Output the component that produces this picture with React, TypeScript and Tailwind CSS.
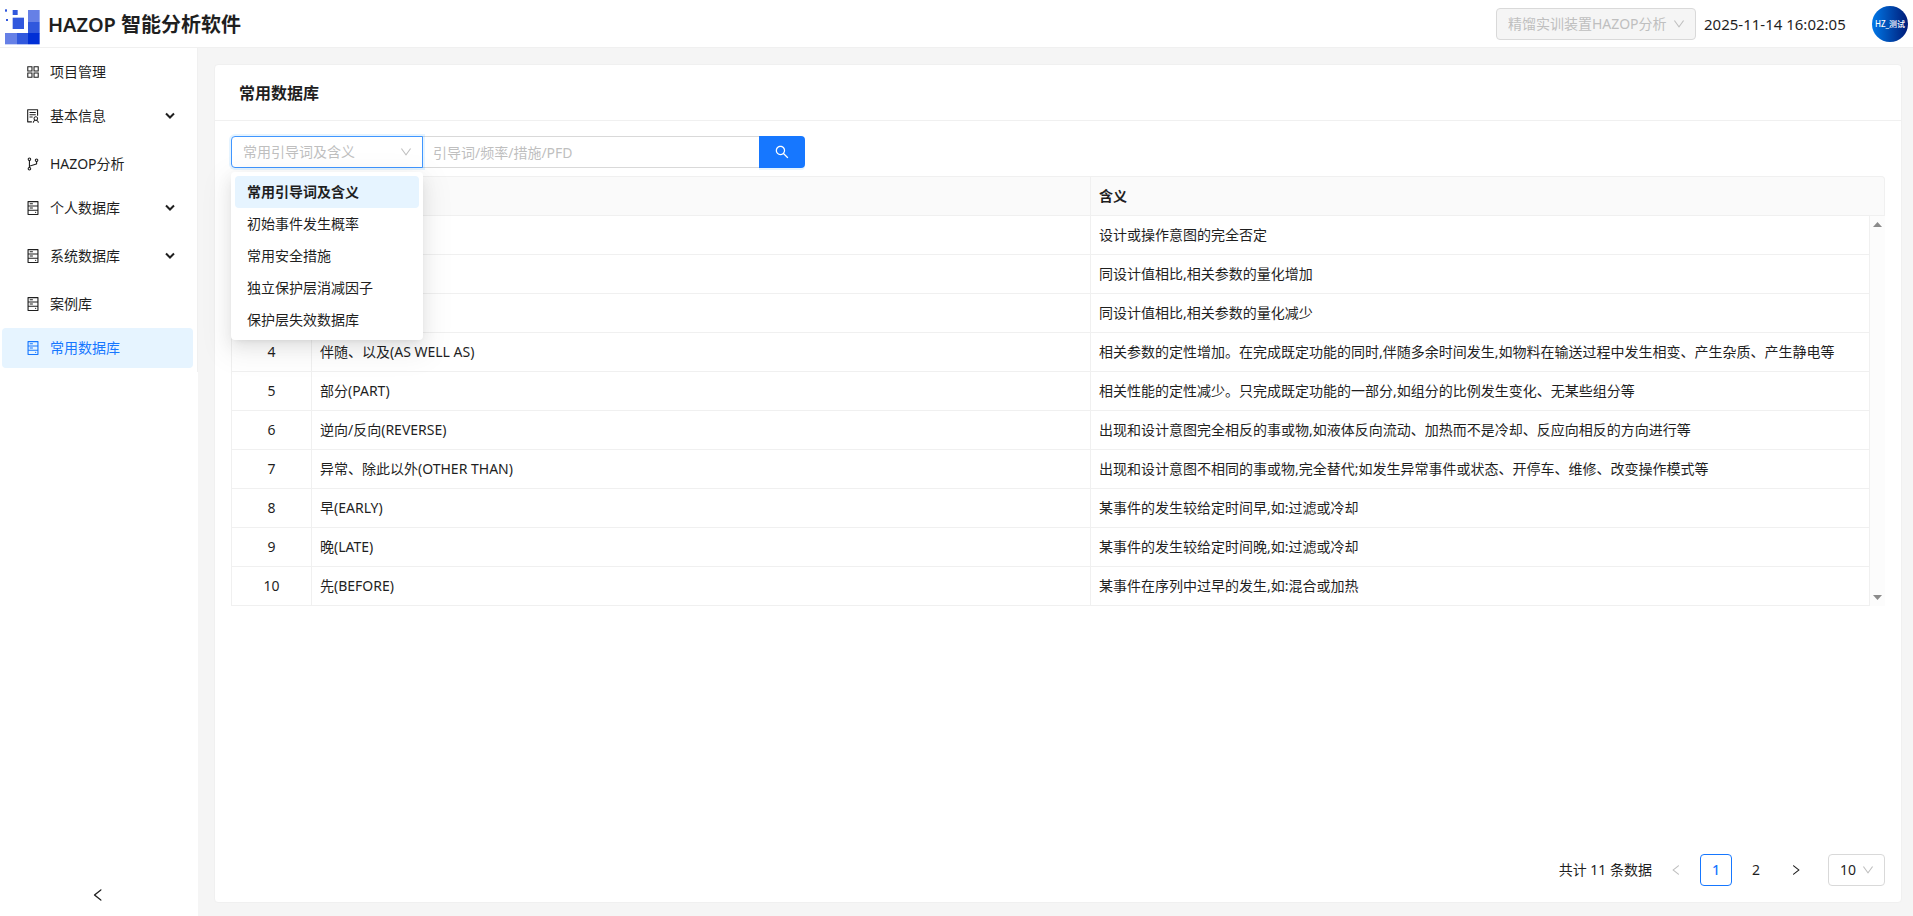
import React from 'react';
import type { IconType } from 'react-icons';
import {
  AiOutlineAppstore,
  AiOutlineBranches,
  AiOutlineDown,
  AiOutlineHdd,
  AiOutlineLeft,
  AiOutlineRight,
  AiOutlineSearch,
  AiOutlineSolution,
} from 'react-icons/ai';

type NavItem = { label: string; icon: IconType; submenu?: boolean; active?: boolean };

const navItems: NavItem[] = [
  { label: '项目管理', icon: AiOutlineAppstore },
  { label: '基本信息', icon: AiOutlineSolution, submenu: true },
  { label: 'HAZOP分析', icon: AiOutlineBranches },
  { label: '个人数据库', icon: AiOutlineHdd, submenu: true },
  { label: '系统数据库', icon: AiOutlineHdd, submenu: true },
  { label: '案例库', icon: AiOutlineHdd },
  { label: '常用数据库', icon: AiOutlineHdd, active: true },
];

const categories = ['常用引导词及含义', '初始事件发生概率', '常用安全措施', '独立保护层消减因子', '保护层失效数据库'];

const rows: [string, string][] = [
  ['无(NO)', '设计或操作意图的完全否定'],
  ['多(MORE)', '同设计值相比,相关参数的量化增加'],
  ['少(LESS)', '同设计值相比,相关参数的量化减少'],
  ['伴随、以及(AS WELL AS)', '相关参数的定性增加。在完成既定功能的同时,伴随多余时间发生,如物料在输送过程中发生相变、产生杂质、产生静电等'],
  ['部分(PART)', '相关性能的定性减少。只完成既定功能的一部分,如组分的比例发生变化、无某些组分等'],
  ['逆向/反向(REVERSE)', '出现和设计意图完全相反的事或物,如液体反向流动、加热而不是冷却、反应向相反的方向进行等'],
  ['异常、除此以外(OTHER THAN)', '出现和设计意图不相同的事或物,完全替代;如发生异常事件或状态、开停车、维修、改变操作模式等'],
  ['早(EARLY)', '某事件的发生较给定时间早,如:过滤或冷却'],
  ['晚(LATE)', '某事件的发生较给定时间晚,如:过滤或冷却'],
  ['先(BEFORE)', '某事件在序列中过早的发生,如:混合或加热'],
];

// Crops the empty margin that the icon set leaves round each glyph.
const glyphBox = '64 64 896 896';

function Logo() {
  return (
    <svg width="36" height="42" viewBox="12 9 108 126" aria-hidden="true">
      <rect x="15" y="28" width="6" height="7" fill="#3158dd" />
      <rect x="18" y="57" width="6" height="6" fill="#3158dd" />
      <rect x="38" y="30" width="15" height="15" fill="#3158dd" />
      <rect x="38" y="53" width="34" height="34" fill="#3158dd" />
      <rect x="84" y="30" width="35" height="36" fill="#6680e6" />
      <rect x="84" y="66" width="35" height="34" fill="#3158dd" />
      <rect x="84" y="99" width="35" height="34" fill="#002fd6" />
      <rect x="15" y="99" width="36" height="34" fill="#6680e6" />
      <rect x="51" y="99" width="33" height="34" fill="#3158dd" />
    </svg>
  );
}

function Header() {
  return (
    <header className="flex h-12 shrink-0 items-center justify-between border-b border-[#f0f0f0] bg-white pt-px pr-[5px] pl-1">
      <div className="flex items-center gap-2">
        <Logo />
        <h1 className="pt-0.5 text-xl leading-7 font-semibold">HAZOP 智能分析软件</h1>
      </div>
      <div className="flex items-center">
        <div className="relative mr-2">
          <select
            aria-label="项目"
            disabled
            className="block h-8 w-[200px] appearance-none rounded border border-[#d9d9d9] bg-[#f5f5f5] pr-7 pl-[11px] text-sm text-[#bfbfbf] opacity-100"
          >
            <option>精馏实训装置HAZOP分析</option>
          </select>
          <AiOutlineDown viewBox={glyphBox} className="pointer-events-none absolute top-[10px] right-[11px] size-3 text-[#bfbfbf]" />
        </div>
        <time className="mr-6 w-36 text-[15px] leading-6 whitespace-nowrap">2025-11-14 16:02:05</time>
        <button
          type="button"
          className="flex size-9 items-center justify-center rounded-full bg-linear-to-r from-[#0078e8] to-[#001a78] text-[8px] font-medium whitespace-nowrap text-white"
        >
          HZ_测试
        </button>
      </div>
    </header>
  );
}

function Sidebar() {
  return (
    <aside className="flex w-[198px] shrink-0 flex-col justify-between bg-white">
      <nav>
        <ul className="flex flex-col gap-1 border-r border-[#f0f0f0] py-1 pr-1 pl-0.5">
          {navItems.map(({ label, icon: Icon, submenu, active }) => (
            <li key={label} className={submenu ? 'pb-1' : ''}>
              <a
                href="#"
                aria-current={active ? 'page' : undefined}
                className={`flex h-10 items-center gap-2.5 rounded pr-[18px] pl-6 text-sm ${active ? 'bg-[#e6f4ff] text-[#1677ff]' : ''}`}
              >
                <Icon viewBox={glyphBox} className="size-3.5" />
                <span className="flex-1">{label}</span>
                {submenu && (
                  <svg width="10" height="8" viewBox="0 0 10 8" fill="none" stroke="currentColor" strokeWidth="2" aria-hidden="true">
                    <path d="M1 1.500 5 5.500 9 1.500" />
                  </svg>
                )}
              </a>
            </li>
          ))}
        </ul>
      </nav>
      <button type="button" aria-label="收起菜单" className="flex h-[42px] items-center justify-center pr-0.5">
        <AiOutlineLeft viewBox={glyphBox} className="size-3.5" />
      </button>
    </aside>
  );
}

function SearchBar() {
  return (
    <form className="flex">
      <div className="relative z-10 w-48">
        <select
          aria-label="数据类别"
          className="block h-8 w-full appearance-none rounded-l border border-[#4096ff] bg-white pr-7 pl-[11px] text-sm text-[#bfbfbf] shadow-[0_0_0_2px_rgba(5,145,255,0.1)] outline-none"
        >
          {categories.map((c) => (
            <option key={c}>{c}</option>
          ))}
        </select>
        <AiOutlineDown viewBox={glyphBox} className="pointer-events-none absolute top-[10px] right-[11px] size-3 text-[#bfbfbf]" />
        <ul
          role="listbox"
          aria-label="数据类别"
          className="absolute top-9 left-0 w-full rounded bg-white p-1 shadow-[0_6px_16px_0_rgba(0,0,0,0.08),0_3px_6px_-4px_rgba(0,0,0,0.12),0_9px_28px_8px_rgba(0,0,0,0.05)]"
        >
          {categories.map((c, i) => (
            <li
              key={c}
              role="option"
              aria-selected={i === 0}
              className={`h-8 rounded px-3 text-sm leading-8 ${i === 0 ? 'bg-[#e6f4ff] font-semibold' : ''}`}
            >
              {c}
            </li>
          ))}
        </ul>
      </div>
      <input
        type="text"
        aria-label="关键词"
        placeholder="引导词/频率/措施/PFD"
        className="-ml-px h-8 w-[337px] border border-r-0 border-[#d9d9d9] px-2.5 text-sm outline-none placeholder:text-[#bfbfbf]"
      />
      <button
        type="button"
        aria-label="搜索"
        className="flex h-8 w-[46px] items-center justify-center rounded-r bg-[#1677ff] text-white shadow-[0_2px_0_rgba(5,145,255,0.1)]"
      >
        <AiOutlineSearch viewBox={glyphBox} className="size-3.5" />
      </button>
    </form>
  );
}

function DataTable() {
  return (
    <div className="relative mt-2">
      <table className="w-full table-fixed border-separate border-spacing-0 text-left text-sm leading-[22px]">
        <colgroup>
          <col className="w-[81px]" />
          <col />
          <col />
          <col className="w-[15px]" />
        </colgroup>
        <thead>
          <tr className="bg-[#fafafa] font-semibold">
            <th className="h-10 rounded-tl border border-[#f0f0f0] p-2 text-center">序号</th>
            <th className="border-y border-r border-[#f0f0f0] px-2">引导词</th>
            <th colSpan={2} className="rounded-tr border-y border-r border-[#f0f0f0] px-2">含义</th>
          </tr>
        </thead>
        <tbody>
          {rows.map(([word, meaning], i) => (
            <tr key={word}>
              <td className="border-x border-b border-[#f0f0f0] p-2 text-center">{i + 1}</td>
              <td className="truncate border-r border-b border-[#f0f0f0] p-2">{word}</td>
              <td className="truncate border-r border-b border-[#f0f0f0] p-2">{meaning}</td>
            </tr>
          ))}
        </tbody>
      </table>
      <div className="absolute top-10 right-0 bottom-0 flex w-[15px] flex-col items-center justify-between bg-[#fcfcfc] py-1.5" aria-hidden="true">
        <svg width="9" height="5" viewBox="0 0 9 5" fill="#8b8b8b">
          <path d="M0 5 4.500 0 9 5Z" />
        </svg>
        <svg width="9" height="5" viewBox="0 0 9 5" fill="#8b8b8b">
          <path d="M0 0 4.500 5 9 0Z" />
        </svg>
      </div>
    </div>
  );
}

function Pagination() {
  return (
    <nav aria-label="分页" className="mt-auto flex items-center justify-end gap-2 text-sm">
      <span className="whitespace-nowrap">共计 11 条数据</span>
      <button type="button" aria-label="上一页" disabled className="flex size-8 items-center justify-center text-[#bfbfbf]">
        <AiOutlineLeft viewBox={glyphBox} className="size-3" />
      </button>
      <button type="button" aria-current="page" className="size-8 rounded border border-[#1677ff] font-medium text-[#1677ff]">
        1
      </button>
      <button type="button" className="size-8">2</button>
      <button type="button" aria-label="下一页" className="flex size-8 items-center justify-center">
        <AiOutlineRight viewBox={glyphBox} className="size-3" />
      </button>
      <div className="relative ml-2">
        <select
          aria-label="每页条数"
          className="block h-8 w-[57px] appearance-none rounded border border-[#d9d9d9] bg-white pr-6 pl-[11px] text-sm"
        >
          <option>10</option>
        </select>
        <AiOutlineDown viewBox={glyphBox} className="pointer-events-none absolute top-[10px] right-[11px] size-3 text-[#bfbfbf]" />
      </div>
    </nav>
  );
}

export default function App() {
  return (
    <div className="flex h-screen flex-col bg-[#f5f5f5] font-['Noto_Sans','Noto_Sans_CJK_SC',sans-serif] text-[#1f1f1f]">
      <Header />
      <div className="flex min-h-0 flex-1">
        <Sidebar />
        <main className="flex min-w-0 flex-1 flex-col pt-4 pr-[11px] pb-[13px] pl-4">
          <section className="flex flex-1 flex-col rounded border border-[#f0f0f0] bg-white">
            <h2 className="flex h-14 items-center border-b border-[#f0f0f0] px-6 text-base font-semibold">常用数据库</h2>
            <div className="flex flex-1 flex-col px-4 pt-[15px] pb-4">
              <SearchBar />
              <DataTable />
              <Pagination />
            </div>
          </section>
        </main>
      </div>
    </div>
  );
}
